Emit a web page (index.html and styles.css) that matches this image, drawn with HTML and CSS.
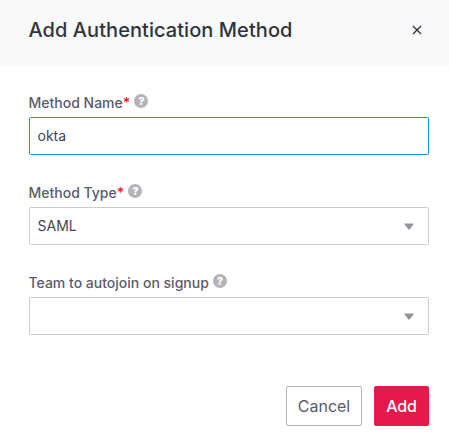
FILE: index.html
```html
<!DOCTYPE html>
<html lang="en">
<head>
<meta charset="utf-8">
<title>Add Authentication Method</title>
<link rel="stylesheet" href="styles.css">
</head>
<body>
<div class="modal">
  <header class="header">
    <h1>Add Authentication Method</h1>
    <button class="close" aria-label="Close"><svg width="10" height="10" viewBox="0 0 10 10"><path d="M1 1l8 8M9 1L1 9" stroke="#333338" stroke-width="1.4" fill="none"/></svg></button>
  </header>
  <form class="form">
    <div class="field">
      <div class="label"><span>Method Name</span><b>*</b><i class="help">?</i></div>
      <div class="control focused"><span>okta</span></div>
    </div>
    <div class="field">
      <div class="label"><span>Method Type</span><b>*</b><i class="help">?</i></div>
      <div class="control"><span>SAML</span><svg class="caret" width="10" height="7" viewBox="0 0 10 7"><path d="M.6.4h8.8q.6 0 .3.7L5.7 6.3q-.7.7-1.4 0L.3 1.1Q0 .4.6.4z"/></svg></div>
    </div>
    <div class="field">
      <div class="label"><span>Team to autojoin on signup</span><i class="help">?</i></div>
      <div class="control"><span></span><svg class="caret" width="10" height="7" viewBox="0 0 10 7"><path d="M.6.4h8.8q.6 0 .3.7L5.7 6.3q-.7.7-1.4 0L.3 1.1Q0 .4.6.4z"/></svg></div>
    </div>
  </form>
  <footer class="footer">
    <button class="btn cancel" type="button">Cancel</button>
    <button class="btn add" type="button">Add</button>
  </footer>
</div>
</body>
</html>
```
FILE: styles.css
```css
* { box-sizing: border-box; }
body { margin: 0; background: #fff; font-family: Inter, sans-serif; color: #333338; }
.modal { height: 442px; overflow: hidden; }
.header { height: 66px; padding: 0 27px 6px 28.5px; background: #f7f9fb; display: flex; align-items: center; justify-content: space-between; }
h1 { margin: 0; font-size: 20px; font-weight: 500; line-height: 24px; letter-spacing: .06px; }
.close { border: 0; background: none; padding: 0; width: 10px; height: 10px; display: flex; }
.form { padding: 27px 20px 0 29px; display: flex; flex-direction: column; gap: 28px; }
.field { height: 62px; }
.label { height: 24px; padding-top: 1px; margin-left: -.5px; display: flex; align-items: flex-start; font-size: 14px; line-height: 17px; font-weight: 500; color: #5b5b6b; }
.label b { color: #e8202a; font-weight: 600; }
.help { width: 14px; height: 14px; margin: 0 0 0 4px; border-radius: 50%; background: #b3b3b8; color: #fff; font-size: 11px; font-weight: 800; font-style: normal; line-height: 14px; text-align: center; }
.control { height: 38px; border: 1px solid #cbcbd0; border-radius: 1.5px; padding: 0 14px 0 7.5px; display: flex; align-items: center; justify-content: space-between; font-size: 14px; line-height: 17px; color: #45454f; }
.control span { padding-bottom: 1px; }
.focused { border-color: #0c9ad9; }
.caret { fill: #92929c; }
.footer { display: flex; justify-content: flex-end; gap: 12px; padding: 51px 20px 0 0; }
.btn { height: 40px; border-radius: 2px; padding: 0; font: 400 16px Inter, sans-serif; }
.cancel { width: 76px; border: 1px solid #b3b3bb; background: #fff; color: #5b5b6b; }
.add { width: 55px; border: 0; background: #e6194b; color: #fff; font-weight: 500; letter-spacing: -.2px; }
```
